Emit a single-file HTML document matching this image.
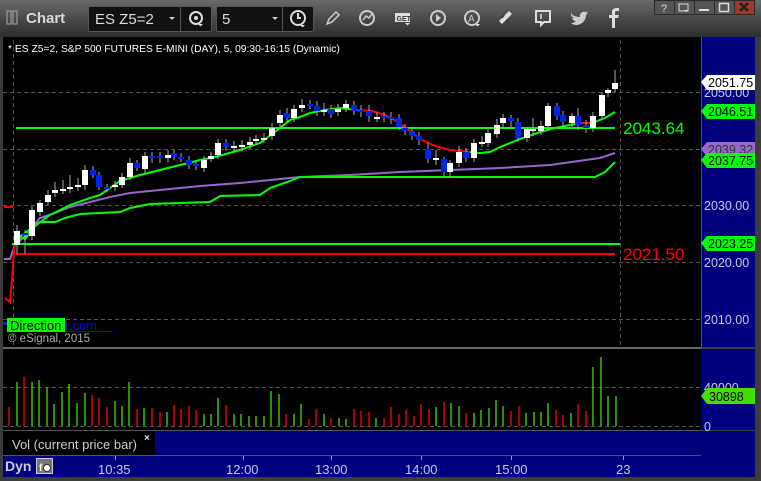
<!DOCTYPE html>
<html><head><meta charset="utf-8"><style>
body{margin:0;width:761px;height:481px;overflow:hidden;background:#3a3a3a;font-family:"Liberation Sans",sans-serif}
svg{display:block}
</style></head><body>
<svg width="761" height="481" viewBox="0 0 761 481" xmlns="http://www.w3.org/2000/svg" font-family="Liberation Sans, sans-serif">
<defs>
<linearGradient id="tb" x1="0" y1="0" x2="0" y2="1"><stop offset="0" stop-color="#6a6a6a"/><stop offset="0.5" stop-color="#4a4a4a"/><stop offset="1" stop-color="#2e2e2e"/></linearGradient>
</defs>
<rect width="761" height="481" fill="#3c3c3c"/>
<rect x="0" y="0" width="761" height="37" fill="url(#tb)"/>
<rect x="7" y="11" width="4" height="13" fill="none" stroke="#aaa" stroke-width="1"/>
<rect x="13" y="11" width="4" height="13" fill="none" stroke="#aaa" stroke-width="1"/>
<text x="26" y="23" font-size="15" font-weight="bold" fill="#d8d8d8">Chart</text>
<rect x="88.5" y="6.5" width="123" height="25" rx="2" fill="#111" stroke="#555"/>
<line x1="180.5" y1="7" x2="180.5" y2="31" stroke="#555"/>
<text x="95" y="24" font-size="15" fill="#ddd">ES Z5=2</text>
<path d="M169 17l3 3 3-3z" fill="#ccc"/>
<circle cx="196" cy="18" r="6" fill="none" stroke="#ddd" stroke-width="2"/><circle cx="196" cy="18" r="2" fill="#ddd"/><path d="M198 24l2.5 2.5 2.5-2.5z" fill="#ddd"/>
<rect x="216.5" y="6.5" width="97" height="25" rx="2" fill="#111" stroke="#555"/>
<line x1="282.5" y1="7" x2="282.5" y2="31" stroke="#555"/>
<text x="222" y="24" font-size="15" fill="#ddd">5</text>
<path d="M272 17l3 3 3-3z" fill="#ccc"/>
<circle cx="298" cy="18" r="7" fill="none" stroke="#ddd" stroke-width="2"/><path d="M298 13v5h3" stroke="#ddd" stroke-width="2" fill="none"/><path d="M300 25l2.5 2.5 2.5-2.5z" fill="#ddd"/>
<path d="M327 24l2-5 7-7 3 3-7 7z" fill="none" stroke="#ccc" stroke-width="1.5"/>
<circle cx="367" cy="18" r="7" fill="none" stroke="#ccc" stroke-width="2"/><path d="M363 20l3-4 3 2 3-4" stroke="#ccc" stroke-width="1.5" fill="none"/>
<rect x="395" y="13" width="15" height="9" fill="#ddd"/><text x="396.5" y="21" font-size="7" font-weight="bold" fill="#333">GET</text><path d="M405 23l2.5 2.5 2.5-2.5z" fill="#ddd"/>
<circle cx="438" cy="18" r="7" fill="none" stroke="#ccc" stroke-width="2"/><path d="M436 14v8l5-4z" fill="#ccc"/>
<circle cx="472" cy="18" r="7" fill="none" stroke="#ccc" stroke-width="2"/><text x="468" y="22" font-size="10" fill="#ccc">A</text><path d="M475 24l2.5 2.5 2.5-2.5z" fill="#ddd"/>
<path d="M502 24l-3-3 10-10 3 3z" fill="#ddd"/><path d="M504 15l-2 3M508 19l-2 3" stroke="#333" stroke-width="1.5"/>
<path d="M536 11h14v11h-6l-3 3v-3h-5z" fill="none" stroke="#ddd" stroke-width="2"/><line x1="541" y1="14" x2="541" y2="19" stroke="#ddd" stroke-width="1.5"/>
<path d="M571 14c3 2 6 3 9 3-1-3 2-6 5-5l3-1-2 2 2 0-2 2c0 6-5 10-10 10-2 0-4-1-5-2 2 0 4-1 5-2-2 0-3-1-4-3h2c-2-1-3-2-3-4l2 1c-2-1-2-3-1-4z" fill="#ccc"/>
<path d="M612 28v-10h-3v-3h3v-3c0-3 2-4 5-4h2v3h-2c-1 0-2 0-2 2v2h4l-1 3h-3v10z" fill="#ddd"/>
<g stroke="#2a2a2a"><rect x="654.5" y="0.5" width="20" height="14" fill="#555"/><rect x="674.5" y="0.5" width="20" height="14" fill="#555"/><rect x="694.5" y="0.5" width="20" height="14" fill="#555"/><rect x="714.5" y="0.5" width="20" height="14" fill="#555"/><rect x="734.5" y="0.5" width="20" height="14" fill="#9c3a2a"/></g>
<text x="661" y="12" font-size="11" fill="#ddd">?</text>
<rect x="679" y="4" width="9" height="7" fill="none" stroke="#ddd"/><path d="M684 10l2 2 2-2z" fill="#ddd"/>
<line x1="699" y1="10" x2="709" y2="10" stroke="#ddd" stroke-width="2"/>
<rect x="719.5" y="3.5" width="9" height="8" fill="none" stroke="#ddd" stroke-width="1.5"/>
<path d="M740 3l8 8M748 3l-8 8" stroke="#222" stroke-width="2.5"/>

<rect x="3" y="37" width="698" height="310" fill="#000"/>
<rect x="701" y="37" width="54" height="310" fill="#00007e"/>
<line x1="701.5" y1="37" x2="701.5" y2="477" stroke="#555"/>
<text x="8" y="52" font-size="10.3" fill="#fff">* ES Z5=2, S&amp;P 500 FUTURES E-MINI (DAY), 5, 09:30-16:15 (Dynamic)</text>
<g stroke="#555" stroke-dasharray="4,3">
<line x1="3" y1="92.5" x2="701" y2="92.5"/><line x1="3" y1="149.5" x2="701" y2="149.5"/><line x1="3" y1="205.5" x2="701" y2="205.5"/><line x1="3" y1="262.5" x2="701" y2="262.5"/><line x1="3" y1="319.5" x2="701" y2="319.5"/>
<line x1="13.5" y1="40" x2="13.5" y2="347"/><line x1="620.5" y1="40" x2="620.5" y2="347"/>
</g>
<line x1="16" y1="128" x2="615" y2="128" stroke="#00ff00" stroke-width="2"/>
<line x1="12" y1="244" x2="620" y2="244" stroke="#00ff00" stroke-width="2"/>
<line x1="16" y1="254" x2="615" y2="254" stroke="#ff0000" stroke-width="2"/>
<line x1="4" y1="207" x2="13" y2="207" stroke="#ff0000" stroke-width="2"/>
<polyline fill="none" stroke="#9966cc" stroke-width="2" points="4,259 10,259 15,245 25,236 40,218 55,213 70,207 90,202 110,197 130,193 160,190 200,186 240,183 270,180 300,177 350,175 400,172 450,170 500,168 550,165 600,158 615,153"/>
<polyline fill="none" stroke="#00ff00" stroke-width="2" points="18,238 40,222 55,222 65,218 80,214 120,212 130,208 150,204 210,202 220,196 260,195 270,188 290,181 300,177 595,177 605,172 615,162"/>
<polyline fill="none" stroke="#00ff00" stroke-width="2" points="20,237 25,239 35,226 50,215 70,205 90,198 100,195 120,181 140,175 160,170 180,165 200,160 215,157 240,150 260,143 275,132 290,120 300,117 310,113 325,110 340,108 357,110"/>
<polyline fill="none" stroke="#ff0000" stroke-width="2" points="357,110 372,111 385,115 398,122 410,131 420,139 435,146 450,150 470,152"/>
<polyline fill="none" stroke="#00ff00" stroke-width="2" points="470,152 480,153 490,152 500,147 520,139 540,132 555,128 570,125 580,123"/>
<polyline fill="none" stroke="#ff0000" stroke-width="2" points="580,123 592,123"/>
<polyline fill="none" stroke="#00ff00" stroke-width="2" points="592,123 605,118 615,112"/>
<polyline fill="none" stroke="#ff0000" stroke-width="2" points="5,298 10,302 12,280 14,250 16,240 18,236"/>
<path stroke="#aaa" stroke-width="1" fill="none" d="M17 225V254M25 230V254M32 206V240M40 200V216M48 190V205M55 182V197M63 180V194M70 175V193M78 178V191M85 165V190M93 166V178M99 172V190M107 184V192M115 181V191M122 173V188M130 158V180M137 160V171M145 152V173M152 152V163M160 152V163M168 150V162M174 150V160M181 153V162M189 156V169M196 160V170M204 156V172M211 152V162M218 139V159M226 139V151M234 141V152M242 140V151M250 137V149M256 135V145M264 133V143M272 123V140M280 110V127M287 108V122M294 105V122M302 99V112M310 100V109M317 101V116M324 103V116M331 105V118M338 104V116M346 100V112M354 101V115M361 105V117M369 105V122M377 112V122M384 112V122M391 112V124M399 114V130M405 124V135M412 128V140M419 132V145M428 143V163M436 150V165M444 157V176M450 160V178M459 146V167M466 148V162M474 139V162M482 136V147M488 128V147M497 119V138M503 114V128M511 115V128M518 118V142M527 127V142M533 118V136M541 121V135M548 103V130M557 103V120M563 111V127M572 113V127M578 108V130M586 120V133M593 112V132M602 92V120M608 88V97M615 70V92"/>
<g fill="#fff">
<rect x="14" y="231" width="6" height="14"/><rect x="29" y="210" width="6" height="26"/><rect x="37" y="203" width="6" height="9"/><rect x="45" y="195" width="6" height="7"/><rect x="52" y="190" width="6" height="3"/><rect x="60" y="189" width="6" height="2"/><rect x="67" y="187" width="6" height="2"/><rect x="75" y="185" width="6" height="2"/><rect x="82" y="170" width="6" height="15"/><rect x="112" y="185" width="6" height="2"/><rect x="119" y="177" width="6" height="8"/><rect x="127" y="163" width="6" height="14"/><rect x="142" y="156" width="6" height="13"/><rect x="165" y="155" width="6" height="3"/><rect x="201" y="160" width="6" height="8"/><rect x="208" y="156" width="6" height="3"/><rect x="215" y="143" width="6" height="12"/><rect x="231" y="146" width="6" height="2"/><rect x="239" y="145" width="6" height="2"/><rect x="247" y="142" width="6" height="3"/><rect x="253" y="139" width="6" height="2"/><rect x="261" y="138" width="6" height="2"/><rect x="269" y="128" width="6" height="8"/><rect x="277" y="115" width="6" height="8"/><rect x="291" y="109" width="6" height="9"/><rect x="299" y="105" width="6" height="3"/><rect x="321" y="110" width="6" height="2"/><rect x="335" y="109" width="6" height="3"/><rect x="343" y="104" width="6" height="4"/><rect x="374" y="117" width="6" height="2"/><rect x="433" y="158" width="6" height="2"/><rect x="447" y="163" width="6" height="9"/><rect x="456" y="152" width="6" height="11"/><rect x="471" y="143" width="6" height="15"/><rect x="479" y="142" width="6" height="2"/><rect x="485" y="133" width="6" height="10"/><rect x="494" y="125" width="6" height="9"/><rect x="500" y="118" width="6" height="5"/><rect x="524" y="129" width="6" height="9"/><rect x="530" y="129" width="6" height="2"/><rect x="538" y="126" width="6" height="5"/><rect x="545" y="106" width="6" height="20"/><rect x="569" y="116" width="6" height="7"/><rect x="590" y="116" width="6" height="12"/><rect x="599" y="95" width="6" height="21"/><rect x="605" y="90" width="6" height="3"/><rect x="612" y="83" width="6" height="6"/>
</g>
<g fill="#0022ee">
<rect x="22" y="233" width="6" height="2"/><rect x="90" y="170" width="6" height="5"/><rect x="96" y="175" width="6" height="12"/><rect x="104" y="187" width="6" height="2"/><rect x="134" y="163" width="6" height="5"/><rect x="149" y="156" width="6" height="2"/><rect x="157" y="156" width="6" height="2"/><rect x="171" y="153" width="6" height="4"/><rect x="178" y="157" width="6" height="2"/><rect x="186" y="160" width="6" height="5"/><rect x="193" y="164" width="6" height="2"/><rect x="223" y="143" width="6" height="4"/><rect x="284" y="113" width="6" height="5"/><rect x="307" y="104" width="6" height="2"/><rect x="314" y="106" width="6" height="5"/><rect x="328" y="109" width="6" height="5"/><rect x="351" y="105" width="6" height="6"/><rect x="358" y="110" width="6" height="2"/><rect x="366" y="111" width="6" height="5"/><rect x="381" y="116" width="6" height="2"/><rect x="388" y="117" width="6" height="2"/><rect x="396" y="118" width="6" height="9"/><rect x="402" y="128" width="6" height="3"/><rect x="409" y="131" width="6" height="5"/><rect x="416" y="136" width="6" height="4"/><rect x="425" y="149" width="6" height="10"/><rect x="441" y="159" width="6" height="13"/><rect x="463" y="152" width="6" height="6"/><rect x="508" y="118" width="6" height="3"/><rect x="515" y="122" width="6" height="16"/><rect x="554" y="106" width="6" height="10"/><rect x="560" y="115" width="6" height="7"/><rect x="575" y="116" width="6" height="9"/><rect x="583" y="125" width="6" height="3"/>
</g>
<text x="623" y="134" font-size="17" fill="#00ff00">2043.64</text>
<text x="623" y="260" font-size="17" fill="#ff0000">2021.50</text>
<g font-size="12.5" fill="#c8c8e8">
<text x="704" y="97">2050.00</text><text x="704" y="210">2030.00</text><text x="704" y="267">2020.00</text><text x="704" y="324">2010.00</text>
</g>
<path d="M701 82l6-7h48v15h-48z" fill="#fff"/><text x="708" y="87" font-size="12.5" fill="#000">2051.75</text>
<path d="M701 111l6-7h48v15h-48z" fill="#00ff00"/><text x="708" y="116" font-size="12.5" fill="#000">2046.51</text>
<path d="M701 149l6-7h48v15h-48z" fill="#9966cc"/><text x="708" y="154" font-size="12.5" fill="#333">2039.32</text>
<path d="M701 160l6-7h48v15h-48z" fill="#00ff00"/><text x="708" y="165" font-size="12.5" fill="#000">2037.75</text>
<path d="M701 243l6-7h48v15h-48z" fill="#00ff00"/><text x="708" y="248" font-size="12.5" fill="#000">2023.25</text>
<rect x="3" y="322" width="7" height="3" fill="#0022ee"/>
<text x="58" y="330" font-size="13" fill="#0000ff">nt.com</text>
<line x1="58" y1="331.5" x2="113" y2="331.5" stroke="#0000ff"/>
<rect x="7" y="318" width="58" height="14" fill="#00ff00"/>
<text x="10" y="330" font-size="13" fill="#000">Direction</text>
<text x="8" y="342" font-size="11.5" fill="#aaa">© eSignal, 2015</text>
<rect x="3" y="347" width="698" height="2" fill="#666"/>
<rect x="3" y="349" width="698" height="81" fill="#000"/>
<rect x="701" y="349" width="54" height="81" fill="#00007e"/>
<g stroke="#555" stroke-dasharray="4,3"><line x1="3" y1="387.5" x2="701" y2="387.5"/><line x1="3" y1="426.5" x2="701" y2="426.5"/></g>
<path stroke="#ff0000" stroke-width="1.3" d="M9 426v-19M24 426v-49M92 426v-31M99 426v-28M107 426v-19M137 426v-17M152 426v-18M160 426v-14M174 426v-21M181 426v-17M189 426v-20M196 426v-16M226 426v-21M286 426v-12M309 426v-7M316 426v-17M331 426v-8M354 426v-17M361 426v-15M369 426v-14M384 426v-8M391 426v-19M399 426v-12M406 426v-16M414 426v-10M421 426v-22M429 426v-17M444 426v-24M466 426v-13M511 426v-15M519 426v-20M556 426v-16M563 426v-11M578 426v-22M586 426v-15"/>
<path stroke="#44dd00" stroke-width="1.3" d="M17 426v-44M32 426v-44M39 426v-46M47 426v-39M54 426v-22M62 426v-34M69 426v-42M77 426v-23M85 426v-33M115 426v-25M122 426v-20M129 426v-44M144 426v-18M167 426v-14M204 426v-12M211 426v-12M218 426v-28M234 426v-12M241 426v-12M249 426v-10M256 426v-10M264 426v-10M271 426v-35M279 426v-32M294 426v-12M301 426v-22M324 426v-12M339 426v-8M346 426v-7M376 426v-8M436 426v-19M451 426v-23M459 426v-20M474 426v-13M481 426v-16M489 426v-18M496 426v-26M503 426v-20M526 426v-13M534 426v-14M541 426v-14M548 426v-23M571 426v-13M593 426v-59M601 426v-69M608 426v-30M616 426v-30"/>
<text x="704" y="392" font-size="12.5" fill="#c8c8e8">40000</text>
<text x="704" y="431" font-size="12.5" fill="#c8c8e8">0</text>
<path d="M701 396l6-8h48v16h-48z" fill="#44dd00"/><text x="709" y="401" font-size="12.5" fill="#000">30898</text>
<line x1="3" y1="430.5" x2="701" y2="430.5" stroke="#555"/>
<rect x="3" y="431" width="152" height="24" fill="#000"/>
<rect x="155" y="431" width="546" height="24" fill="#00007e"/>
<rect x="701" y="431" width="54" height="46" fill="#00007e"/>
<text x="12" y="449" font-size="13" fill="#ccc">Vol (current price bar)</text>
<text x="144" y="441" font-size="10" font-weight="bold" fill="#ddd">×</text>
<line x1="3" y1="455.5" x2="701" y2="455.5" stroke="#555" stroke-width="1"/>
<rect x="3" y="456" width="698" height="21" fill="#00007e"/>
<g stroke="#999"><line x1="115.5" y1="456" x2="115.5" y2="460"/><line x1="243.5" y1="456" x2="243.5" y2="460"/><line x1="331.5" y1="456" x2="331.5" y2="460"/><line x1="421.5" y1="456" x2="421.5" y2="460"/><line x1="511.5" y1="456" x2="511.5" y2="460"/><line x1="623.5" y1="456" x2="623.5" y2="460"/></g>
<text x="5" y="471" font-size="14" font-weight="bold" fill="#ccc">Dyn</text>
<rect x="36.5" y="458.5" width="16" height="15" fill="#777" stroke="#ccc"/>
<text x="39" y="471" font-size="10" font-weight="bold" fill="#fff">f</text><circle cx="47" cy="468" r="3.5" fill="#fff" stroke="#333"/>
<g font-size="13" fill="#c8c8e8">
<text x="98" y="474">10:35</text><text x="226" y="474">12:00</text><text x="315" y="474">13:00</text><text x="405" y="474">14:00</text><text x="495" y="474">15:00</text><text x="616" y="474">23</text>
</g>
<rect x="0" y="477" width="761" height="4" fill="#3c3c3c"/>
<rect x="755" y="37" width="6" height="444" fill="#3c3c3c"/>
<rect x="0" y="37" width="3" height="444" fill="#3c3c3c"/>
</svg>
</body></html>
